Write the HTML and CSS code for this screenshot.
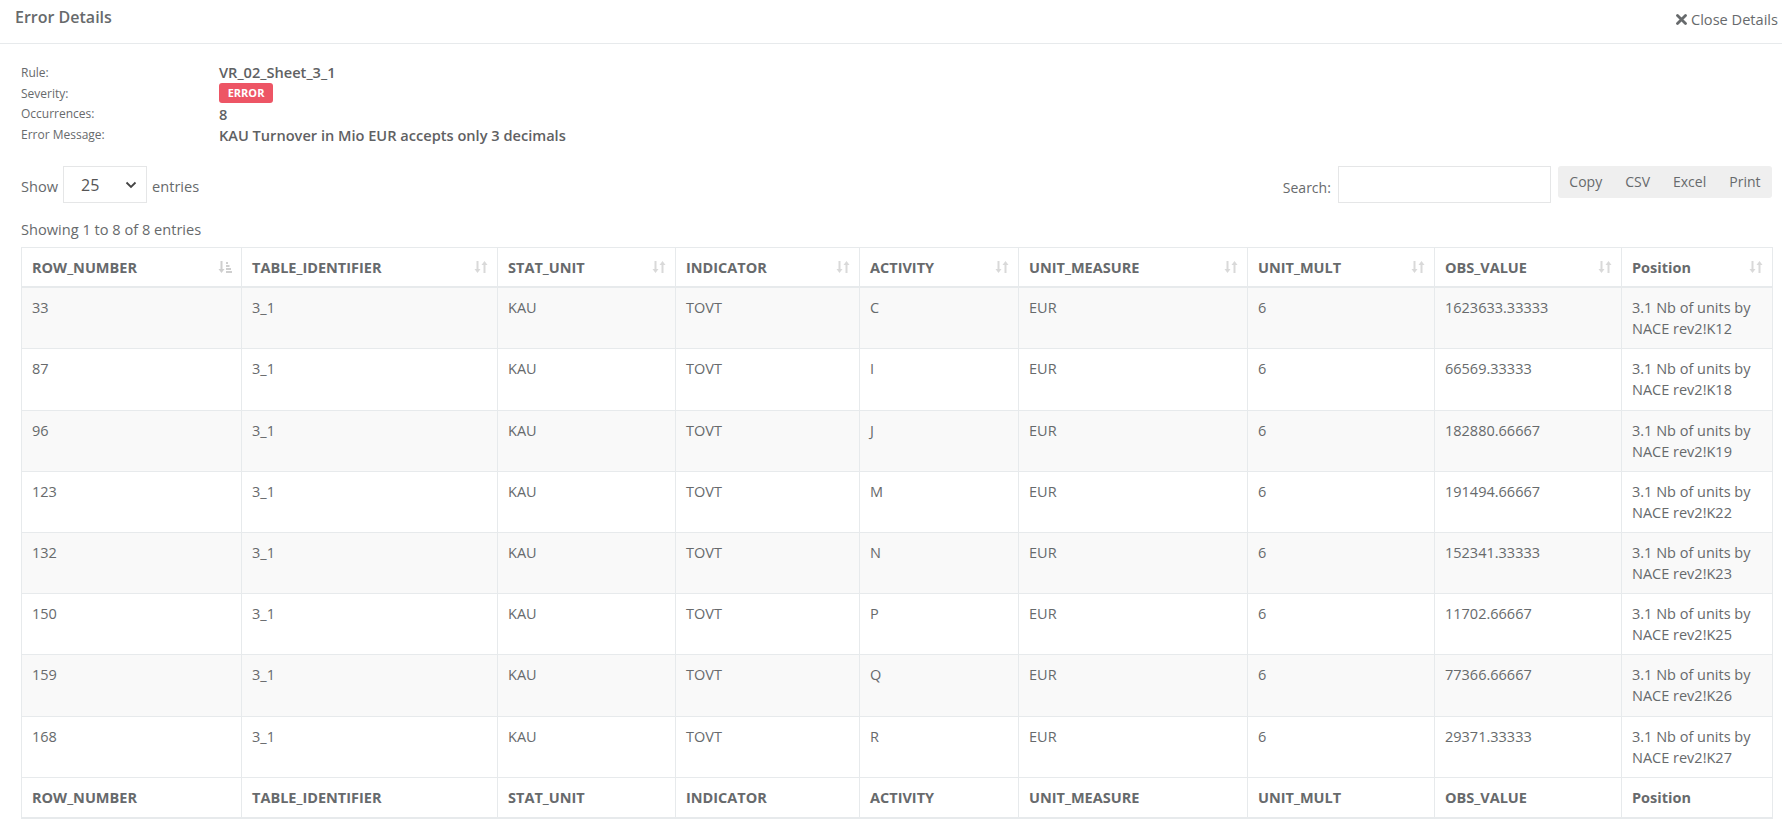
FILE: index.html
```html
<!DOCTYPE html>
<html>
<head>
<meta charset="utf-8">
<link rel="stylesheet" href="styles.css">
</head>
<body>
<div class="panel">
  <div class="panel-head">
    <div class="title">Error Details</div>
    <div class="close">
      <svg class="close-x" width="11" height="11" viewBox="0 0 11 11"><path d="M1.5 1.5 L9.5 9.5 M9.5 1.5 L1.5 9.5" stroke="#676a6c" stroke-width="2.8" stroke-linecap="round"/></svg>
      <span>Close Details</span>
    </div>
  </div>

  <div class="content">
    <div class="info">
      <div class="lbl">Rule:</div><div class="val">VR_02_Sheet_3_1</div>
      <div class="lbl">Severity:</div><div class="val"><span class="badge">ERROR</span></div>
      <div class="lbl">Occurrences:</div><div class="val">8</div>
      <div class="lbl">Error Message:</div><div class="val">KAU Turnover in Mio EUR accepts only 3 decimals</div>
    </div>

    <div class="controls">
      <div class="length">
        <span>Show</span>
        <div class="select"><span>25</span>
          <svg width="12" height="8" viewBox="0 0 12 8"><path d="M1.5 1.5 L6 6 L10.5 1.5" fill="none" stroke="#444" stroke-width="1.8"/></svg>
        </div>
        <span>entries</span>
      </div>
      <div class="right-ctrl">
        <span>Search:</span>
        <div class="search"></div>
        <div class="btns">
          <span class="btn">Copy</span><span class="btn">CSV</span><span class="btn">Excel</span><span class="btn">Print</span>
        </div>
      </div>
    </div>

    <div class="showing">Showing 1 to 8 of 8 entries</div>

    <table class="grid">
      <colgroup>
        <col class="c1"><col class="c2"><col class="c3"><col class="c4"><col class="c5"><col class="c6"><col class="c7"><col class="c8"><col class="c9">
      </colgroup>
      <thead>
        <tr>
          <th><div class="th"><span>ROW_NUMBER</span><svg class="si" width="14" height="14" viewBox="0 0 14 14"><path d="M3.5 1 V11" stroke="#cfcfcf" stroke-width="2"/><path d="M0.5 9 L3.5 13 L6.5 9 Z" fill="#cfcfcf"/><rect x="8" y="2" width="2" height="2" fill="#cfcfcf"/><rect x="8" y="5" width="3.5" height="2" fill="#cfcfcf"/><rect x="8" y="8" width="5" height="2" fill="#cfcfcf"/><rect x="8" y="11" width="6" height="2" fill="#cfcfcf"/></svg></div></th>
          <th><div class="th"><span>TABLE_IDENTIFIER</span><svg class="si" width="14" height="14" viewBox="0 0 14 14"><path d="M3.5 1 V11" stroke="#d9d9d9" stroke-width="2"/><path d="M0.5 9 L3.5 13 L6.5 9 Z" fill="#d9d9d9"/><path d="M10.5 3 V13" stroke="#d9d9d9" stroke-width="2"/><path d="M7.5 5 L10.5 1 L13.5 5 Z" fill="#d9d9d9"/></svg></div></th>
          <th><div class="th"><span>STAT_UNIT</span><svg class="si" width="14" height="14" viewBox="0 0 14 14"><path d="M3.5 1 V11" stroke="#d9d9d9" stroke-width="2"/><path d="M0.5 9 L3.5 13 L6.5 9 Z" fill="#d9d9d9"/><path d="M10.5 3 V13" stroke="#d9d9d9" stroke-width="2"/><path d="M7.5 5 L10.5 1 L13.5 5 Z" fill="#d9d9d9"/></svg></div></th>
          <th><div class="th"><span>INDICATOR</span><svg class="si" width="14" height="14" viewBox="0 0 14 14"><path d="M3.5 1 V11" stroke="#d9d9d9" stroke-width="2"/><path d="M0.5 9 L3.5 13 L6.5 9 Z" fill="#d9d9d9"/><path d="M10.5 3 V13" stroke="#d9d9d9" stroke-width="2"/><path d="M7.5 5 L10.5 1 L13.5 5 Z" fill="#d9d9d9"/></svg></div></th>
          <th><div class="th"><span>ACTIVITY</span><svg class="si" width="14" height="14" viewBox="0 0 14 14"><path d="M3.5 1 V11" stroke="#d9d9d9" stroke-width="2"/><path d="M0.5 9 L3.5 13 L6.5 9 Z" fill="#d9d9d9"/><path d="M10.5 3 V13" stroke="#d9d9d9" stroke-width="2"/><path d="M7.5 5 L10.5 1 L13.5 5 Z" fill="#d9d9d9"/></svg></div></th>
          <th><div class="th"><span>UNIT_MEASURE</span><svg class="si" width="14" height="14" viewBox="0 0 14 14"><path d="M3.5 1 V11" stroke="#d9d9d9" stroke-width="2"/><path d="M0.5 9 L3.5 13 L6.5 9 Z" fill="#d9d9d9"/><path d="M10.5 3 V13" stroke="#d9d9d9" stroke-width="2"/><path d="M7.5 5 L10.5 1 L13.5 5 Z" fill="#d9d9d9"/></svg></div></th>
          <th><div class="th"><span>UNIT_MULT</span><svg class="si" width="14" height="14" viewBox="0 0 14 14"><path d="M3.5 1 V11" stroke="#d9d9d9" stroke-width="2"/><path d="M0.5 9 L3.5 13 L6.5 9 Z" fill="#d9d9d9"/><path d="M10.5 3 V13" stroke="#d9d9d9" stroke-width="2"/><path d="M7.5 5 L10.5 1 L13.5 5 Z" fill="#d9d9d9"/></svg></div></th>
          <th><div class="th"><span>OBS_VALUE</span><svg class="si" width="14" height="14" viewBox="0 0 14 14"><path d="M3.5 1 V11" stroke="#d9d9d9" stroke-width="2"/><path d="M0.5 9 L3.5 13 L6.5 9 Z" fill="#d9d9d9"/><path d="M10.5 3 V13" stroke="#d9d9d9" stroke-width="2"/><path d="M7.5 5 L10.5 1 L13.5 5 Z" fill="#d9d9d9"/></svg></div></th>
          <th><div class="th"><span>Position</span><svg class="si" width="14" height="14" viewBox="0 0 14 14"><path d="M3.5 1 V11" stroke="#d9d9d9" stroke-width="2"/><path d="M0.5 9 L3.5 13 L6.5 9 Z" fill="#d9d9d9"/><path d="M10.5 3 V13" stroke="#d9d9d9" stroke-width="2"/><path d="M7.5 5 L10.5 1 L13.5 5 Z" fill="#d9d9d9"/></svg></div></th>
        </tr>
      </thead>
      <tbody>
        <tr><td>33</td><td>3_1</td><td>KAU</td><td>TOVT</td><td>C</td><td>EUR</td><td>6</td><td>1623633.33333</td><td>3.1 Nb of units by NACE rev2!K12</td></tr>
        <tr><td>87</td><td>3_1</td><td>KAU</td><td>TOVT</td><td>I</td><td>EUR</td><td>6</td><td>66569.33333</td><td>3.1 Nb of units by NACE rev2!K18</td></tr>
        <tr><td>96</td><td>3_1</td><td>KAU</td><td>TOVT</td><td>J</td><td>EUR</td><td>6</td><td>182880.66667</td><td>3.1 Nb of units by NACE rev2!K19</td></tr>
        <tr><td>123</td><td>3_1</td><td>KAU</td><td>TOVT</td><td>M</td><td>EUR</td><td>6</td><td>191494.66667</td><td>3.1 Nb of units by NACE rev2!K22</td></tr>
        <tr><td>132</td><td>3_1</td><td>KAU</td><td>TOVT</td><td>N</td><td>EUR</td><td>6</td><td>152341.33333</td><td>3.1 Nb of units by NACE rev2!K23</td></tr>
        <tr><td>150</td><td>3_1</td><td>KAU</td><td>TOVT</td><td>P</td><td>EUR</td><td>6</td><td>11702.66667</td><td>3.1 Nb of units by NACE rev2!K25</td></tr>
        <tr><td>159</td><td>3_1</td><td>KAU</td><td>TOVT</td><td>Q</td><td>EUR</td><td>6</td><td>77366.66667</td><td>3.1 Nb of units by NACE rev2!K26</td></tr>
        <tr><td>168</td><td>3_1</td><td>KAU</td><td>TOVT</td><td>R</td><td>EUR</td><td>6</td><td>29371.33333</td><td>3.1 Nb of units by NACE rev2!K27</td></tr>
      </tbody>
      <tfoot>
        <tr><th>ROW_NUMBER</th><th>TABLE_IDENTIFIER</th><th>STAT_UNIT</th><th>INDICATOR</th><th>ACTIVITY</th><th>UNIT_MEASURE</th><th>UNIT_MULT</th><th>OBS_VALUE</th><th>Position</th></tr>
      </tfoot>
    </table>
  </div>
</div>
</body>
</html>
```

FILE: styles.css
```css
* { box-sizing: border-box; }
html, body { margin: 0; padding: 0; }
body {
  font-family: "Open Sans", "Liberation Sans", sans-serif;
  color: #676a6c;
  background: #f3f3f4;
  font-size: 14.6px;
}
.panel { background: #fff; padding-bottom: 1px; }
.panel-head {
  display: flex;
  justify-content: space-between;
  align-items: flex-start;
  height: 44px;
  padding: 5px 4px 0 15px;
  border-bottom: 1px solid #e7eaec;
}
.title { font-size: 16px; line-height: 24px; font-weight: 600; }
.close {
  display: flex;
  align-items: center;
  gap: 4px;
  font-size: 14.6px;
  line-height: 24px;
  margin-top: 2px;
}
.close-x { margin-top: 1px; }

.content { padding: 18px 10px 0 21px; }

.info {
  display: grid;
  grid-template-columns: 198px auto;
  grid-auto-rows: 20.8px;
  align-items: center;
}
.lbl { font-size: 12px; }
.val { font-size: 14.6px; font-weight: 600; color: #5f6163; display: flex; align-items: center; }
.badge {
  display: inline-block;
  height: 20px;
  line-height: 20px;
  padding: 0 8.7px;
  background: #ed5565;
  color: #fff;
  font-size: 11px;
  font-weight: 700;
  border-radius: 3px;
}

.controls {
  display: flex;
  justify-content: space-between;
  align-items: flex-start;
  margin-top: 21px;
}
.length { display: flex; align-items: center; gap: 5px; height: 37px; padding-top: 3px; }
.select {
  width: 84px;
  height: 37px;
  margin-top: -3px;
  border: 1px solid #e5e6e7;
  display: flex;
  align-items: center;
  justify-content: space-between;
  padding: 0 9px 0 17px;
  font-size: 16px;
  color: #555;
}
.right-ctrl { display: flex; align-items: flex-start; gap: 7px; font-size: 14px; }
.right-ctrl > span { line-height: 37px; padding-top: 3px; }
.search { width: 213px; height: 37px; border: 1px solid #e5e6e7; background: #fff; }
.btns {
  display: flex;
  height: 32px;
  background: #efefef;
  border-radius: 3px;
}
.btn { padding: 0 11.5px; line-height: 32px; font-size: 14px; color: #676a6c; }

.showing { margin-top: 13px; line-height: 21px; }

.grid {
  margin-top: 7px;
  width: 1751px;
  table-layout: fixed;
  border-collapse: collapse;
  font-size: 14.5px;
  line-height: 21px;
}
.c1 { width: 220px; } .c2 { width: 256px; } .c3 { width: 178px; }
.c4 { width: 184px; } .c5 { width: 159px; } .c6 { width: 229px; }
.c7 { width: 187px; } .c8 { width: 187px; } .c9 { width: 151px; }
.grid th, .grid td {
  border: 1px solid #e7eaec;
  text-align: left;
  vertical-align: top;
}
.grid thead th { padding: 8.5px 9px 8.5px 10px; border-bottom: 2px solid #e7eaec; font-weight: 700; }
.th { display: flex; justify-content: space-between; align-items: center; }
.si { flex: none; }
.grid td { padding: 9px 10px 9.2px; }
.grid tbody tr:nth-child(odd) td { background: #f9f9f9; }
.grid tfoot th { padding: 9px 10px 9.5px; font-weight: 700; border-bottom: 2px solid #e7eaec; }
```
